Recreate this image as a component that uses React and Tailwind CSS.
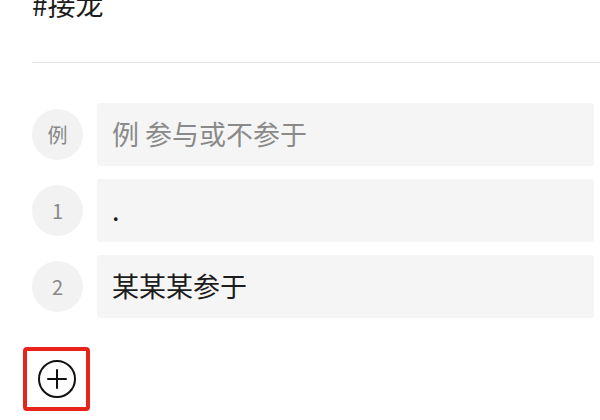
import React from "react";

const rows = [
  { label: "例", text: "例 参与或不参于", placeholder: true },
  { label: "1", text: ".", placeholder: false },
  { label: "2", text: "某某某参于", placeholder: false },
];

function Row({ label, text, placeholder }) {
  return (
    <div className="flex items-center gap-[14px] pr-[6px]">
      <div className="flex h-[51px] w-[51px] shrink-0 items-center justify-center rounded-full bg-[#f2f2f2] text-[20px] text-[#888]">
        {label}
      </div>
      <div className="flex h-[63px] flex-1 items-center rounded-[3px] bg-[#f5f5f5] px-[15px]">
        <span className={placeholder ? "text-[27px] text-[#8a8a8a]" : "text-[27px] text-[#1c1c1c]"}>{text}</span>
      </div>
    </div>
  );
}

export default function App() {
  return (
    <div
      className="h-[420px] w-[600px] overflow-hidden bg-white pl-8"
      style={{ fontFamily: '"Noto Sans CJK SC", "Noto Sans", sans-serif' }}
    >
      <div className="-mt-[10px] flex h-[73px] items-start border-b border-[#e6e6e6]">
        <span className="text-[28px] leading-[28px] text-[#1c1c1c]">#接龙</span>
      </div>

      <div className="mt-[40px] flex flex-col gap-[13px]">
        {rows.map((r, i) => (
          <Row key={i} {...r} />
        ))}
      </div>

      <div className="-ml-[9px] mt-[29px] flex h-[64px] w-[67px] items-center justify-center rounded-[4px] border-[4px] border-[#e8231a]">
        <svg width="40" height="40" viewBox="0 0 40 40" fill="none" stroke="#111" strokeWidth="2">
          <circle cx="20" cy="20" r="18" />
          <path d="M20 11v18M11 20h18" strokeLinecap="round" />
        </svg>
      </div>
    </div>
  );
}
